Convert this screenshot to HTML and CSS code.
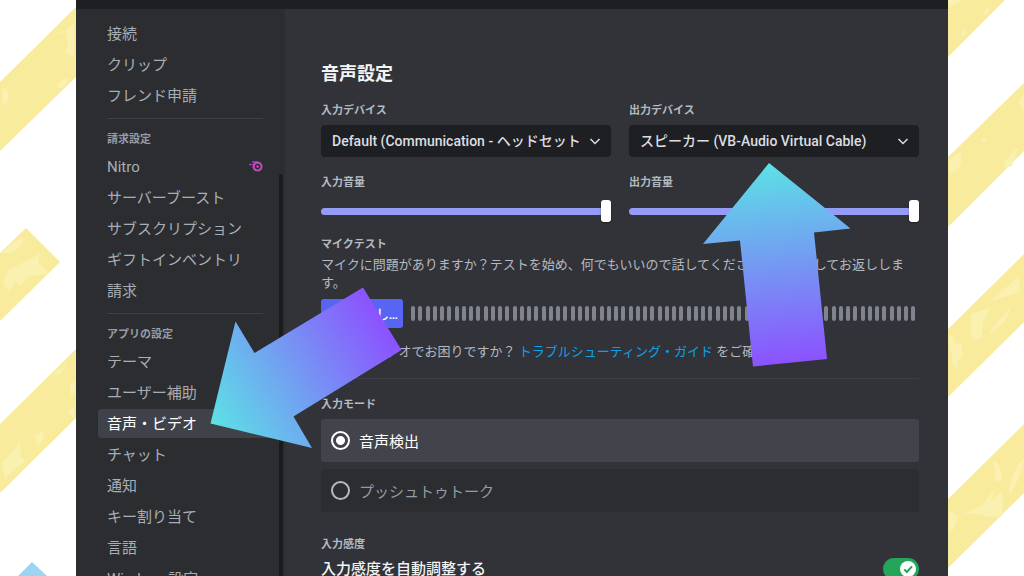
FILE: index.html
```html
<!DOCTYPE html>
<html lang="ja">
<head>
<meta charset="utf-8">
<title>音声・ビデオ</title>
<link rel="stylesheet" href="styles.css">
</head>
<body>
<svg class="backdrop" viewBox="0 0 1024 576" preserveAspectRatio="none" aria-hidden="true">
  <g fill="#f9eb9c">
    <path d="M0 82 76 7V77L0 151Z"/>
    <path d="M0 253 26 228 60 262 0 321Z"/>
    <path d="M0 424 76 349V418L0 493Z"/>
    <path d="M948 0H1005L948 57Z"/>
    <path d="M948 157 1024 83V151L948 227Z"/>
    <path d="M948 329 1024 254V322L948 397Z"/>
    <path d="M948 499 1024 424V493L948 568Z"/>
  </g>
  <g fill="#faf0b0">
    <path d="M55 34q8-4 10-2l-6 2zM66 30l8-6v34q-6-4-9-4l3-10zM57 86l4-6 7-2-3 8-7 3zM3 87q6 2 6 10l-4 9-3-4z"/>
    <path d="M2 251 23 236q0 12-12 17H2zM8 270l12-6 16-8 3-5v14q8 2 9 9l-18 2-10 10-4-4-7 10-6-9 3-5z"/>
    <path d="M2 463l12-14 6-8 1 16 4 4-14 12-6 6zM35 436l8-6 1 5-6 13zM70 386l5-6v12l-4 4zM68 410l6-4v12l-5-4zM53 373l14-8-8 10z"/>
    <path d="M948 0h14l-12 8zM962 32l3-5 1 6-4 4zM983 13l8-8-2 6-5 5z"/>
    <path d="M949 160l12-8v12q-4 8-12 10zM981 140l6-3-2 6zM1004 163l10-14 4-1-6 18-7 2zM1018 103l6-9v16z"/>
    <path d="M991 300l14-12 14-11 1 15-28 9zM971 314l19-6-7 14-1 14q-8 8-11-1zM949 335q6 0 5 8l8 2v12q-6 4-5 12-6-4-5-14-4-6-3-20zM989 332l18-21 5-7-6 16-14 13z"/>
    <path d="M964 513l18-7 12-16-2 12 10-12 1 12-1 14-13 1-8-2zM993 461q7 0 9 18l-6 4zM1009 490q4-22 15-32-2 18-14 36zM949 511l5 2 4 4-5 13-4 3z"/>
  </g>
  <path d="M18 576 32 562 47 576Z" fill="#9cd4f2"/>
</svg>

<div class="window">
  <div class="titlebar"></div>
  <div class="layout">
    <nav class="sidebar" aria-label="設定">
      <a class="item" href="#">接続</a>
      <a class="item" href="#">クリップ</a>
      <a class="item" href="#">フレンド申請</a>
      <hr class="side-rule">
      <h2 class="side-title">請求設定</h2>
      <a class="item" href="#">Nitro
        <svg class="nitro" viewBox="0 0 14 11" aria-hidden="true">
          <path d="M0 3.5H2M3 1H9M2.5 3.6H6M3.6 6H5" stroke="#a645b8" stroke-width="1.4" fill="none"/>
          <circle cx="8.6" cy="5.6" r="3.9" fill="none" stroke="#bb4cb4" stroke-width="2.2"/>
          <circle cx="8.6" cy="5.6" r="1.3" fill="#bb4cb4"/>
        </svg>
      </a>
      <a class="item" href="#">サーバーブースト</a>
      <a class="item" href="#">サブスクリプション</a>
      <a class="item" href="#">ギフトインベントリ</a>
      <a class="item" href="#">請求</a>
      <hr class="side-rule">
      <h2 class="side-title">アプリの設定</h2>
      <a class="item" href="#">テーマ</a>
      <a class="item" href="#">ユーザー補助</a>
      <a class="item active" href="#" aria-current="page">音声・ビデオ</a>
      <a class="item" href="#">チャット</a>
      <a class="item" href="#">通知</a>
      <a class="item" href="#">キー割り当て</a>
      <a class="item" href="#">言語</a>
      <a class="item" href="#">Windows設定</a>
      <div class="scrollbar"></div>
    </nav>

    <main class="content">
      <h1 class="title">音声設定</h1>
      <div class="columns">
        <div class="field">
          <label class="label" for="in-device">入力デバイス</label>
          <div class="picker">
            <select class="select" id="in-device"><option>Default (Communication - ヘッドセット</option></select>
            <svg class="chevron" viewBox="0 0 12 12" aria-hidden="true"><path d="M1.500 4 6 8.500 10.500 4"/></svg>
          </div>
        </div>
        <div class="field">
          <label class="label" for="out-device">出力デバイス</label>
          <div class="picker">
            <select class="select" id="out-device"><option>スピーカー (VB-Audio Virtual Cable)</option></select>
            <svg class="chevron" viewBox="0 0 12 12" aria-hidden="true"><path d="M1.500 4 6 8.500 10.500 4"/></svg>
          </div>
        </div>
        <div class="field">
          <label class="label" for="in-volume">入力音量</label>
          <input class="slider" id="in-volume" type="range" min="0" max="100" value="100">
        </div>
        <div class="field">
          <label class="label" for="out-volume">出力音量</label>
          <input class="slider" id="out-volume" type="range" min="0" max="100" value="100">
        </div>
      </div>

      <h2 class="label mic-title">マイクテスト</h2>
      <p class="text">マイクに問題がありますか？テストを始め、何でもいいので話してください。録音をしてお返しします。</p>
      <div class="mic-row">
        <button class="button" type="button">テストをしてみる</button>
        <div class="meter" id="meter"></div>
      </div>
      <p class="text help">ボイス・ビデオでお困りですか？ <a class="link" href="#">トラブルシューティング・ガイド</a> をご確認ください。</p>
      <hr class="rule">

      <fieldset class="modes">
        <legend class="label">入力モード</legend>
        <label class="mode selected"><input class="radio" type="radio" name="mode" checked>音声検出</label>
        <label class="mode"><input class="radio" type="radio" name="mode">プッシュトゥトーク</label>
      </fieldset>

      <h2 class="label sense-title">入力感度</h2>
      <div class="switch-row">
        <label for="auto-sense">入力感度を自動調整する</label>
        <span class="switch">
          <input class="switch-input" id="auto-sense" type="checkbox" checked>
          <svg class="check" viewBox="0 0 16 16" aria-hidden="true"><circle cx="8" cy="8" r="8" fill="#fff"/><path d="M4.200 8.400 6.800 11 12 5.400" fill="none" stroke="#23a55a" stroke-width="2"/></svg>
        </span>
      </div>
    </main>
  </div>
</div>

<svg class="arrows" viewBox="0 0 1024 576" preserveAspectRatio="none" aria-hidden="true">
  <defs>
    <linearGradient id="g1" gradientUnits="userSpaceOnUse" x1="211" y1="423" x2="382" y2="319"><stop offset="0" stop-color="#5ce1e6"/><stop offset="1" stop-color="#8c52ff"/></linearGradient>
    <linearGradient id="g2" gradientUnits="userSpaceOnUse" x1="769" y1="163" x2="790" y2="363"><stop offset="0" stop-color="#5ce1e6"/><stop offset="1" stop-color="#8c52ff"/></linearGradient>
  </defs>
  <path d="M210.500 423.500 235.500 321.500 254.500 353 363 287.500 401.500 350 293.500 416.500 312 448Z" fill="url(#g1)"/>
  <path d="M769 163 703 244 740 240.500 753 366.500 827 359 814 232.500 850.500 228.500Z" fill="url(#g2)"/>
</svg>
<script src="meter.js"></script>
</body>
</html>
```
FILE: styles.css
```css
* { box-sizing: border-box; }

body {
  margin: 0;
  height: 100vh;
  overflow: hidden;
  position: relative;
  background: #fff;
  color: #dbdee1;
  font-family: Roboto, "Noto Sans CJK JP", sans-serif;
  font-size: 15px;
}

h1, h2, p { margin: 0; }

.backdrop,
.arrows {
  position: absolute;
  inset: 0;
  width: 100%;
  height: 100%;
  pointer-events: none;
}

.window {
  position: relative;
  display: flex;
  flex-direction: column;
  height: 100%;
  margin: 0 76px;
  overflow: hidden;
  background: #313338;
}

.titlebar { flex: none; height: 9px; background: #1e1f22; }

.layout { flex: 1; display: flex; min-height: 0; }

.sidebar {
  position: relative;
  flex: none;
  width: 209px;
  padding: 10px 13px 0 22px;
  overflow: hidden;
  background: #2b2d31;
}

.item {
  display: flex;
  align-items: center;
  justify-content: space-between;
  height: 29px;
  margin-bottom: 2px;
  padding: 0 9px;
  border-radius: 4px;
  color: #a9adb5;
  line-height: 28px;
  text-decoration: none;
  white-space: nowrap;
}

.item.active { background: #404249; color: #fff; }

.nitro { width: 14px; height: 11px; }

.side-rule,
.rule {
  height: 1px;
  border: 0;
  background: #3d3f45;
}

.side-rule { margin: 8px 9px 0; }

.side-title {
  margin: 12px 9px 3px;
  color: #989ca5;
  font-size: 11px;
  font-weight: 600;
  line-height: 18px;
}

.scrollbar {
  position: absolute;
  top: 165px;
  right: 2px;
  bottom: 0;
  width: 4px;
  border-radius: 2px 2px 0 0;
  background: #1a1b1e;
}

.content {
  flex: 1;
  min-width: 0;
  padding: 53px 29px 0 36px;
}

.title {
  color: #f2f3f5;
  font-size: 18px;
  font-weight: 700;
  line-height: 24px;
}

.columns {
  display: grid;
  grid-template-columns: 1fr 1fr;
  gap: 17px 18px;
  margin-top: 16px;
}

.field { min-width: 0; }

.label {
  display: block;
  padding: 0;
  color: #b5bac1;
  font-size: 11px;
  font-weight: 700;
  line-height: 18px;
}

.picker { position: relative; margin-top: 5px; }

.select {
  display: block;
  width: 100%;
  height: 32px;
  padding: 0 22px 0 11px;
  appearance: none;
  border: 0;
  border-radius: 4px;
  background: #1e1f22;
  color: #dbdee1;
  font: 500 14px Roboto, "Noto Sans CJK JP", sans-serif;
}

.chevron {
  position: absolute;
  top: 10px;
  right: 10px;
  width: 12px;
  height: 12px;
  fill: none;
  stroke: #dbdee1;
  stroke-width: 1.5;
  pointer-events: none;
}

.slider {
  display: block;
  width: 100%;
  height: 22px;
  margin: 8px 0 0;
  appearance: none;
  background: transparent;
}

.slider::-webkit-slider-runnable-track {
  height: 7px;
  border-radius: 4px;
  background: #949cf7;
}

.slider::-webkit-slider-thumb {
  width: 10px;
  height: 22px;
  margin-top: -8px;
  appearance: none;
  border-radius: 3px;
  background: #fff;
  box-shadow: 0 1px 2px rgba(0, 0, 0, .4);
}

.mic-title { margin-top: 14px; }

.text {
  margin-top: 2px;
  color: #b5bac1;
  font-size: 13px;
  line-height: 18px;
}

.mic-row {
  display: flex;
  align-items: center;
  gap: 8px;
  margin-top: 7px;
}

.button {
  flex: none;
  width: 82px;
  height: 29px;
  padding: 0 3px;
  overflow: hidden;
  border: 0;
  border-radius: 3px;
  background: #5865f2;
  color: #fff;
  font: 500 13px Roboto, "Noto Sans CJK JP", sans-serif;
  text-overflow: ellipsis;
  white-space: nowrap;
}

.meter {
  flex: 1;
  display: flex;
  justify-content: space-between;
  padding-right: 3px;
}

.bar { width: 4px; height: 15px; border-radius: 2px; background: #80848e; }

.help { margin-top: 15px; white-space: nowrap; }

.link { color: #0ea0ec; text-decoration: none; }

.rule { margin: 17px 0 0; }

.modes { margin: 17px 0 0; padding: 0; border: 0; min-width: 0; }

.mode {
  display: flex;
  align-items: center;
  gap: 9px;
  height: 43px;
  margin-top: 7px;
  padding: 0 10px;
  border-radius: 3px;
  background: #2b2d31;
  color: #949ba4;
}

.mode.selected { margin-top: 5px; background: #43444b; color: #fff; }

.radio {
  flex: none;
  width: 19px;
  height: 19px;
  margin: 0;
  appearance: none;
  border: 2px solid #b5bac1;
  border-radius: 50%;
}

.radio:checked {
  border-color: #fff;
  background: radial-gradient(circle, #fff 4px, transparent 5px);
}

.sense-title { margin-top: 24px; }

.switch-row {
  display: flex;
  align-items: center;
  justify-content: space-between;
  margin-top: 4px;
  color: #f2f3f5;
  font-weight: 500;
  line-height: 22px;
}

.switch { position: relative; width: 36px; height: 22px; }

.switch-input {
  display: block;
  width: 36px;
  height: 22px;
  margin: 0;
  appearance: none;
  border-radius: 11px;
  background: #23a55a;
}

.check {
  position: absolute;
  top: 3px;
  right: 3px;
  width: 16px;
  height: 16px;
  pointer-events: none;
}
```
FILE: meter.js
```js
const meter = document.getElementById("meter");
for (let i = 0; i < 70; i++) {
  const bar = document.createElement("span");
  bar.className = "bar";
  meter.append(bar);
}
```
